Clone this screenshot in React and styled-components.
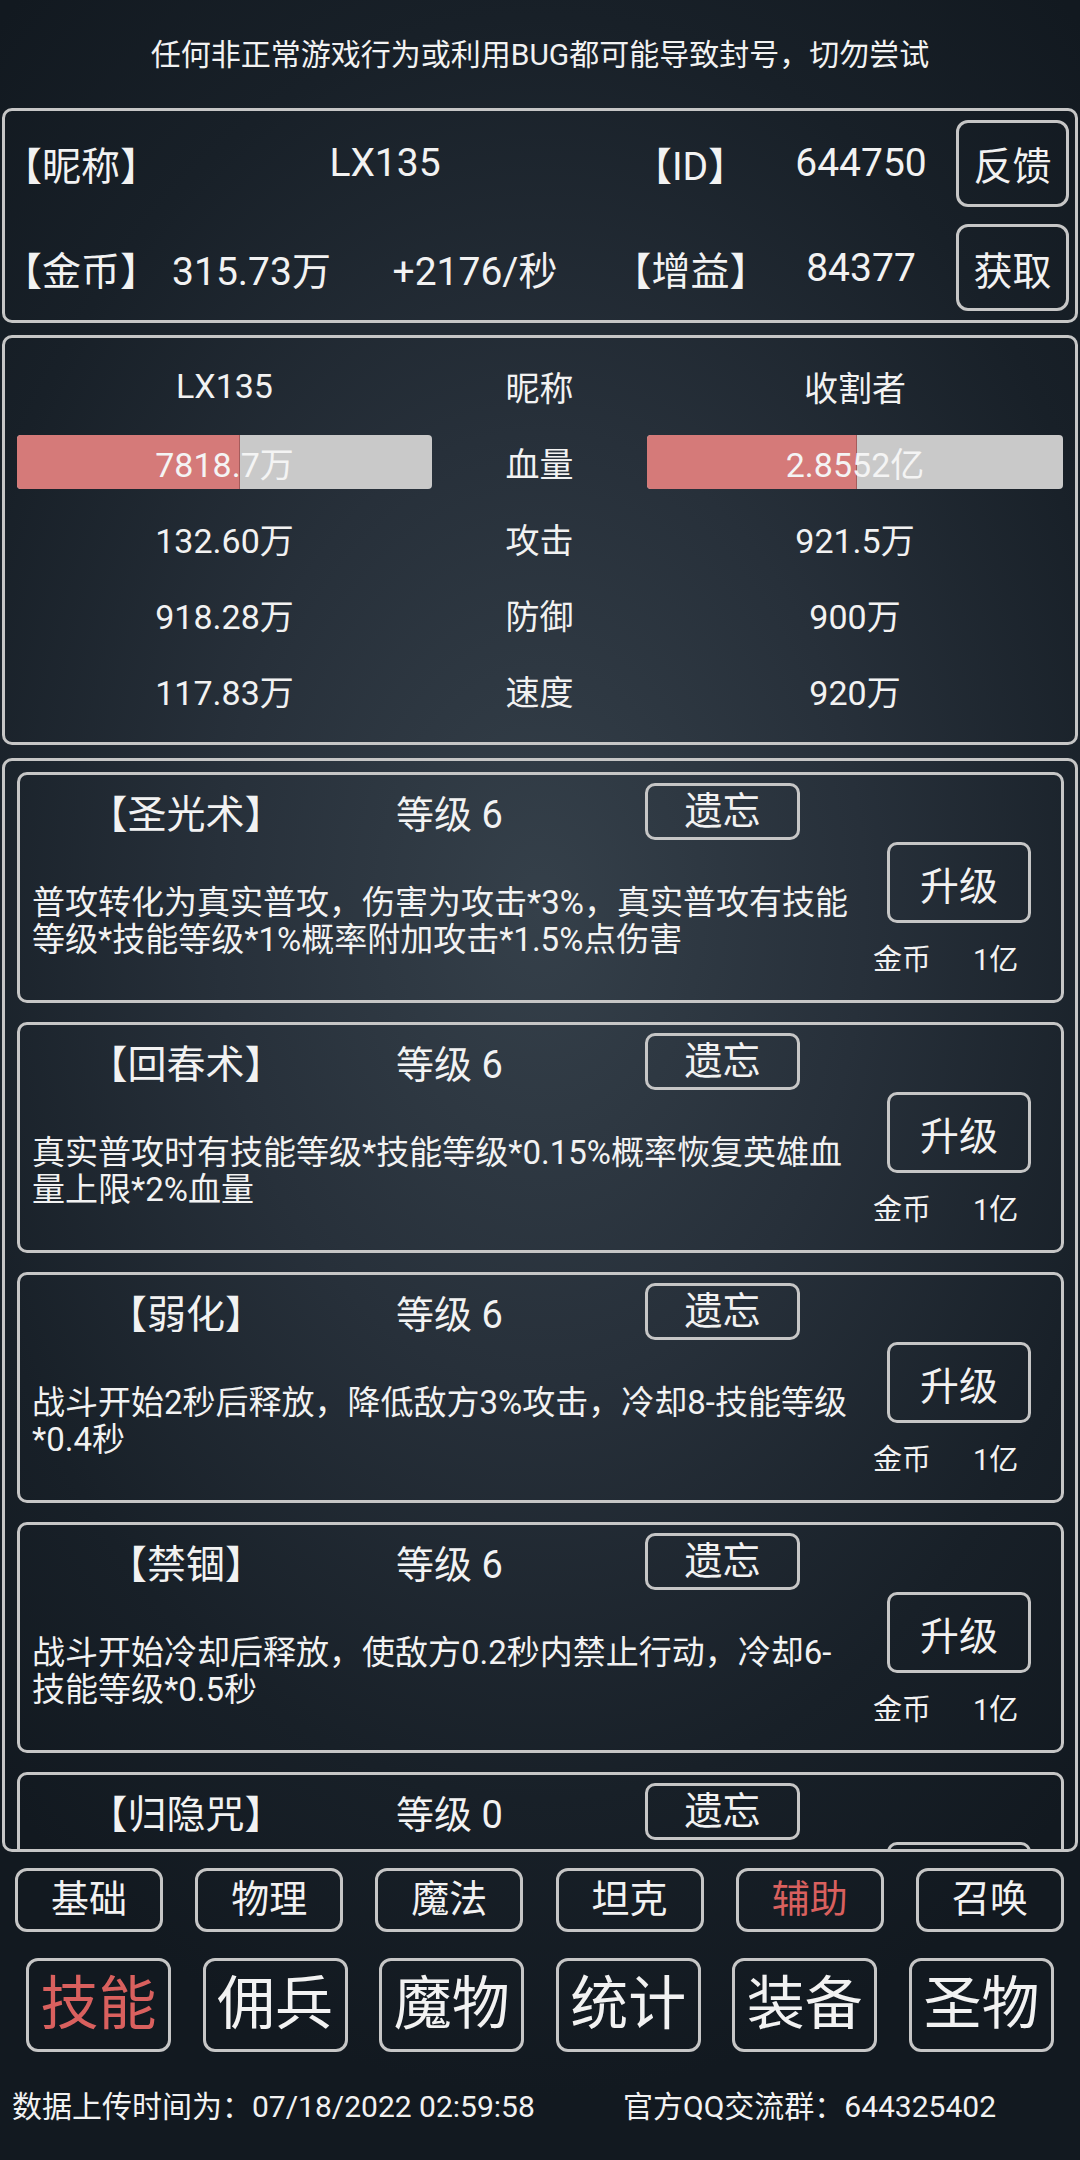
import React from "react"
import styled, { createGlobalStyle } from "styled-components"

const GlobalStyle = createGlobalStyle`
  html, body { margin: 0; padding: 0; background: #141b22; }
  body { font-family: Roboto, "Noto Sans CJK SC", sans-serif; color: #f2f2f2; }
  * { box-sizing: border-box; }
`

const Page = styled.div`
  width: 1080px; height: 2160px; overflow: hidden;
  display: flex; flex-direction: column;
  background: radial-gradient(ellipse 75% 55% at 50% 42%, #35404a 0%, #27303a 40%, #182028 75%, #121920 100%);
`

const Notice = styled.div`
  height: 108px;
  display: flex; align-items: center; justify-content: center;
  font-size: 30px; padding-bottom: 4px;
`

const Panel = styled.div`
  margin: 0 2px;
  border: 3px solid #c6c6c6;
  border-radius: 10px;
`

const InfoPanel = styled(Panel)`
  height: 215px;
  display: flex; flex-direction: column;
`

const InfoRow = styled.div`
  flex: 1;
  display: grid;
  grid-template-columns: ${p => p.$cols} 1fr;
  align-items: center;
  font-size: 39px;
  & > span { text-align: center; white-space: nowrap; font-feature-settings: "halt"; }
`

const SideButton = styled.button`
  justify-self: end; margin-right: 6px;
  width: 113px; height: 87px;
  background: transparent; color: #f2f2f2;
  border: 3px solid #c6c6c6; border-radius: 12px;
  font: inherit; font-size: 39px; padding: 0;
`

const StatsPanel = styled(Panel)`
  margin-top: 12px;
  height: 410px;
  padding: 10px 15px 0 12px;
  display: grid;
  grid-template-columns: 415px 215px 416px;
  grid-auto-rows: 76px;
  align-items: center;
  font-size: 34px;
  & > span { text-align: center; white-space: nowrap; }
`

const Bar = styled.div`
  position: relative;
  height: 54px; border-radius: 4px; overflow: hidden;
  background: #c9c9c9;
  display: flex; align-items: center; justify-content: center;
`

const BarFill = styled.div`
  position: absolute; left: 0; top: 0; bottom: 0;
  background: #d57a79;
  border-right: 1px solid #a55c5c;
`

const BarText = styled.span`
  position: relative; color: #f4f4f4;
`

const ListPanel = styled(Panel)`
  margin-top: 13px;
  height: 1094px;
  overflow: hidden;
  padding: 11px 11px 0 12px;
  display: flex; flex-direction: column; gap: 19px;
`

const Card = styled.div`
  flex: none;
  height: 231px;
  border: 3px solid #c6c6c6;
  border-radius: 10px;
  display: grid;
  grid-template-columns: 867px 1fr;
`

const CardMain = styled.div`
  display: flex; flex-direction: column;
`

const CardHead = styled.div`
  height: 72px;
  display: grid;
  grid-template-columns: 332px 293px 155px;
  align-items: center;
  font-size: 39px;
`

const SkillName = styled.span`
  text-align: center; white-space: nowrap; font-feature-settings: "halt";
`

const SkillLevel = styled.span`
  padding-left: 44px; white-space: nowrap; font-size: 38px;
`

const ForgetButton = styled.button`
  width: 155px; height: 57px;
  background: transparent; color: #f2f2f2;
  border: 3px solid #c6c6c6; border-radius: 10px;
  font: inherit; font-size: 38px; padding: 0; line-height: 1;
`

const Desc = styled.div`
  margin-top: 37px; padding-left: 12px;
  font-size: 33px; line-height: 37px;
  white-space: nowrap;
`

const CardSide = styled.div`
  padding-top: 67px;
  display: flex; flex-direction: column;
`

const UpgradeButton = styled.button`
  width: 144px; height: 81px;
  background: transparent; color: #f2f2f2;
  border: 3px solid #c6c6c6; border-radius: 10px;
  font: inherit; font-size: 39px; padding: 0;
`

const Cost = styled.div`
  margin-top: 20px; margin-left: -14px;
  display: flex; gap: 42px;
  font-size: 29px; line-height: 34px;
`

const TabRow = styled.div`
  display: flex; justify-content: space-between;
  margin-top: ${p => p.$mt}px;
  padding: 0 ${p => p.$pr}px 0 ${p => p.$pl}px;
`

const Tab = styled.button`
  width: ${p => p.$w}px; height: ${p => p.$h}px;
  background: transparent;
  color: ${p => (p.$active ? "#d9605e" : "#f2f2f2")};
  border: 3px solid #c6c6c6; border-radius: 12px;
  font-family: Roboto, "Noto Sans CJK SC", sans-serif;
  font-size: ${p => p.$fs}px; padding: 0; line-height: 1.2;
`

const Footer = styled.div`
  flex: 1;
  display: flex; align-items: center;
  padding: 0 0 4px 12px;
  font-size: 30px; white-space: nowrap;
`

const FooterRight = styled.span`
  margin-left: auto; width: 457px;
`

const skills = [
  { name: "【圣光术】", level: 6, lines: ["普攻转化为真实普攻，伤害为攻击*3%，真实普攻有技能", "等级*技能等级*1%概率附加攻击*1.5%点伤害"] },
  { name: "【回春术】", level: 6, lines: ["真实普攻时有技能等级*技能等级*0.15%概率恢复英雄血", "量上限*2%血量"] },
  { name: "【弱化】", level: 6, lines: ["战斗开始2秒后释放，降低敌方3%攻击，冷却8-技能等级", "*0.4秒"] },
  { name: "【禁锢】", level: 6, lines: ["战斗开始冷却后释放，使敌方0.2秒内禁止行动，冷却6-", "技能等级*0.5秒"] },
  // last card is cut off by the list viewport, only its header shows
  { name: "【归隐咒】", level: 0, lines: [], cut: true },
]

const subTabs = ["基础", "物理", "魔法", "坦克", "辅助", "召唤"]
const mainTabs = ["技能", "佣兵", "魔物", "统计", "装备", "圣物"]

const stats = [
  ["132.60万", "攻击", "921.5万"],
  ["918.28万", "防御", "900万"],
  ["117.83万", "速度", "920万"],
]

const HpBar = ({ value, ratio }) => (
  <Bar>
    <BarFill style={{ width: `${ratio * 100}%` }} />
    <BarText>{value}</BarText>
  </Bar>
)

const SkillCard = ({ skill }) => (
  <Card>
    <CardMain>
      <CardHead>
        <SkillName>{skill.name}</SkillName>
        <SkillLevel>等级 {skill.level}</SkillLevel>
        <ForgetButton>遗忘</ForgetButton>
      </CardHead>
      <Desc>
        {skill.lines.map(l => <div key={l}>{l}</div>)}
      </Desc>
    </CardMain>
    <CardSide>
      <UpgradeButton aria-label="升级">{skill.cut ? null : "升级"}</UpgradeButton>
      {!skill.cut && <Cost><span>金币</span><span>1亿</span></Cost>}
    </CardSide>
  </Card>
)

export default function App() {
  return (
    <Page>
      <GlobalStyle />
      <Notice>任何非正常游戏行为或利用BUG都可能导致封号，切勿尝试</Notice>

      <InfoPanel>
        <InfoRow $cols="152px 456px 154px 188px">
          <span>【昵称】</span>
          <span>LX135</span>
          <span>【ID】</span>
          <span>644750</span>
          <SideButton>反馈</SideButton>
        </InfoRow>
        <InfoRow $cols="152px 189px 258px 173px 168px">
          <span>【金币】</span>
          <span>315.73万</span>
          <span>+2176/秒</span>
          <span>【增益】</span>
          <span>84377</span>
          <SideButton>获取</SideButton>
        </InfoRow>
      </InfoPanel>

      <StatsPanel>
        <span>LX135</span>
        <span>昵称</span>
        <span>收割者</span>
        <HpBar value="7818.7万" ratio={0.537} />
        <span>血量</span>
        <HpBar value="2.8552亿" ratio={0.505} />
        {stats.map(row => row.map((c, i) => <span key={row[1] + i}>{c}</span>))}
      </StatsPanel>

      <ListPanel>
        {skills.map(s => <SkillCard key={s.name} skill={s} />)}
      </ListPanel>

      <TabRow $mt={16} $pl={15} $pr={16}>
        {subTabs.map(t => (
          <Tab key={t} $w={148} $h={64} $fs={38} $active={t === "辅助"}>{t}</Tab>
        ))}
      </TabRow>

      <TabRow $mt={26} $pl={26} $pr={26}>
        {mainTabs.map(t => (
          <Tab key={t} $w={145} $h={94} $fs={58} $active={t === "技能"}>{t}</Tab>
        ))}
      </TabRow>

      <Footer>
        <span>数据上传时间为：07/18/2022 02:59:58</span>
        <FooterRight>官方QQ交流群：644325402</FooterRight>
      </Footer>
    </Page>
  )
}
